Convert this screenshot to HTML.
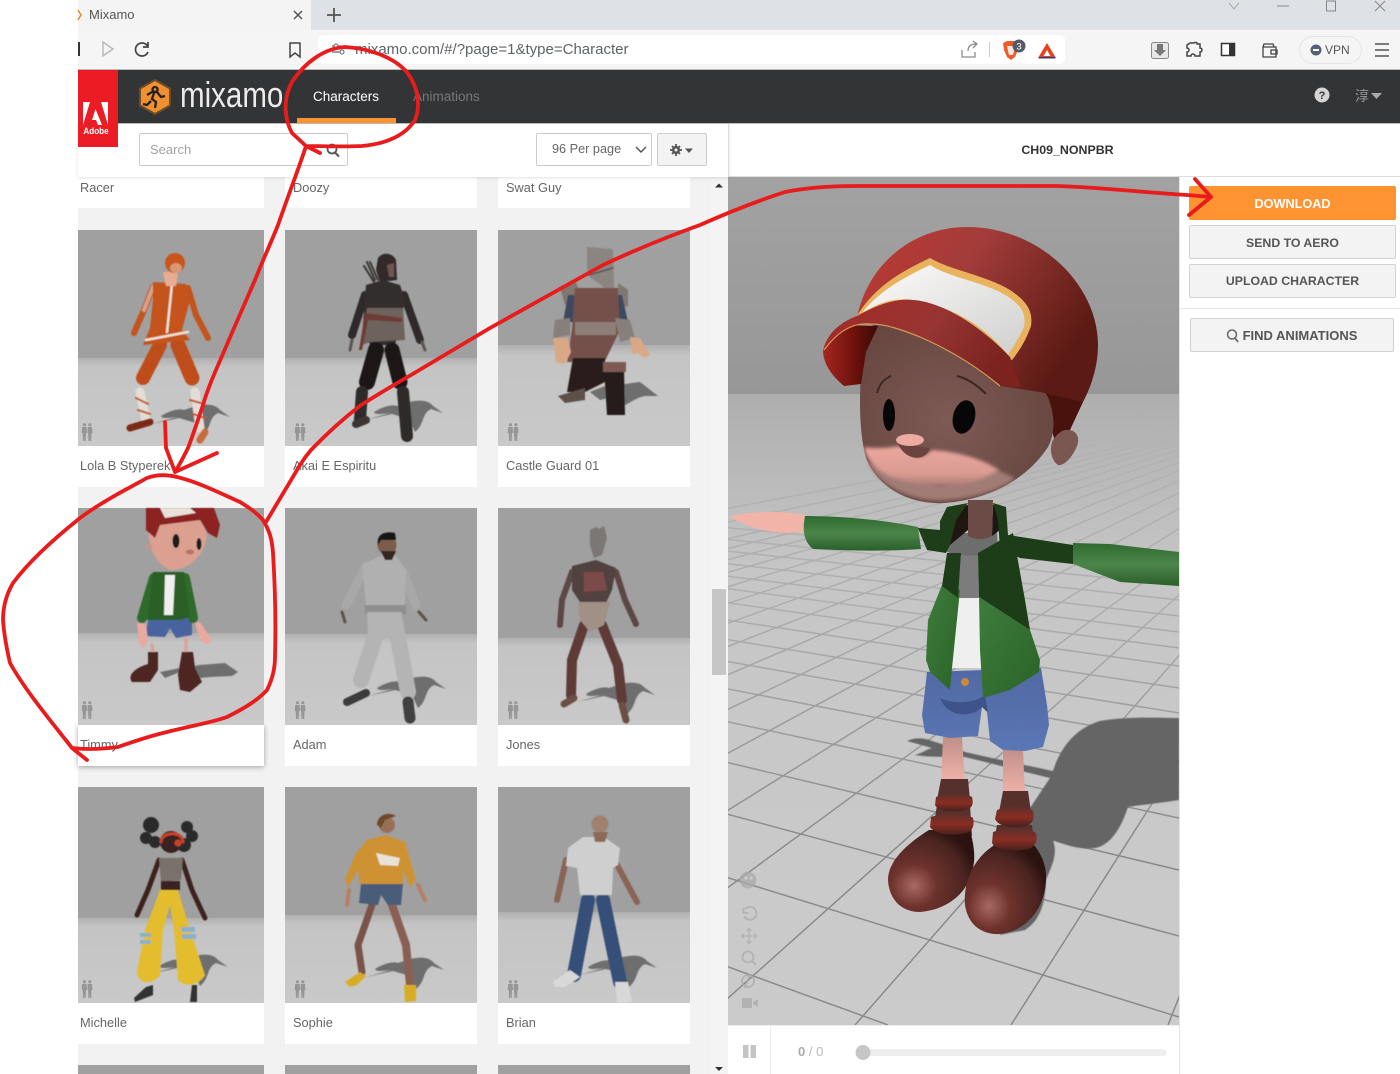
<!DOCTYPE html>
<html lang="en"><head><meta charset="utf-8"><title>Mixamo</title>
<style>
*{box-sizing:border-box}
html,body{margin:0;padding:0;width:1400px;height:1074px;overflow:hidden;background:#fff;font-family:"Liberation Sans","Noto Sans CJK SC",sans-serif}
#w{position:relative;width:1400px;height:1074px;overflow:hidden}
.a{position:absolute}
.lab{position:absolute;font-size:12.8px;color:#666;line-height:16px;white-space:nowrap;z-index:2}
.card{position:absolute;background:#fff}
.btn{position:absolute;border:1px solid #d2d2d2;background:#f3f3f3;border-radius:2px;color:#555;font-weight:bold;font-size:12.3px;text-align:center;white-space:nowrap}
svg{position:absolute;left:0;top:0;overflow:hidden}
</style></head><body><div id="w">
<!-- browser chrome -->
<div class="a" style="left:78px;top:0;width:1322px;height:30px;background:#dee1e6"></div>
<div class="a" style="left:78px;top:0;width:233px;height:30px;background:#f4f4f4"></div>
<div class="a" style="left:78px;top:30px;width:1322px;height:40px;background:#f5f5f5;border-bottom:1px solid #bbb"></div>
<div class="a" style="left:318px;top:35px;width:747px;height:29px;background:#fff;border-radius:5px"></div>
<div class="a" style="left:89px;top:7px;font-size:13px;color:#555;line-height:16px">Mixamo</div>
<div class="a" style="left:355px;top:41px;font-size:15px;color:#5f6368;line-height:18px;white-space:nowrap">mixamo.com/#/?page=1&amp;type=Character</div>
<div class="a" style="left:1325px;top:43px;font-size:12px;color:#555;line-height:15px">VPN</div>
<!-- header -->
<div class="a" style="left:78px;top:70px;width:1322px;height:54px;background:#333436;border-bottom:1px solid #bdbdbd"></div>
<div class="a" style="left:180px;top:72px;font-size:36px;line-height:46px;color:#ececec;transform:scaleX(.82);transform-origin:0 0;white-space:nowrap">mixamo</div>
<div class="a" style="left:313px;top:88px;font-size:13.5px;color:#fff;line-height:17px">Characters</div>
<div class="a" style="left:413px;top:88px;font-size:13.5px;color:#777;line-height:17px">Animations</div>
<div class="a" style="left:297px;top:118px;width:99px;height:5px;background:#ff9231"></div>
<div class="a" style="left:1355px;top:88px;font-size:14px;color:#999;line-height:17px">淳</div>
<!-- toolbar -->
<div class="a" style="left:78px;top:124px;width:651px;height:53px;background:#fff;border-right:1px solid #ddd;box-shadow:0 1px 3px rgba(0,0,0,.12);z-index:3"></div>
<div class="a" style="left:78px;top:70px;width:40px;height:77px;background:#ec1c24;z-index:4"></div>
<div class="a" style="left:78px;top:126px;width:36px;text-align:center;font-size:9px;font-weight:bold;color:#fff;line-height:11px;transform:scaleX(.9);z-index:5">Adobe</div>
<div class="a" style="left:139px;top:133px;width:209px;height:33px;border:1px solid #ccc;border-radius:2px;z-index:4;background:#fff;font-size:13px;color:#a0a0a0;line-height:31px;padding-left:10px">Search</div>
<div class="a" style="left:536px;top:133px;width:116px;height:33px;border:1px solid #ccc;border-radius:2px;z-index:4;background:#fff;font-size:12.7px;color:#666;line-height:31px;padding-left:15px;white-space:nowrap">96 Per page</div>
<div class="a" style="left:657px;top:133px;width:50px;height:33px;border:1px solid #ccc;border-radius:2px;z-index:4;background:#f3f3f3"></div>
<div class="a" style="left:729px;top:124px;width:671px;height:53px;background:#fff;border-bottom:1px solid #ddd;text-align:center;font-weight:bold;font-size:12.4px;line-height:52px;color:#333;padding-left:6px">CH09_NONPBR</div>
<!-- list -->
<div class="a" style="left:78px;top:177px;width:650px;height:897px;background:#f2f2f2"></div>
<div class="a" style="left:711px;top:177px;width:17px;height:897px;background:#f4f4f4"></div>
<div class="a" style="left:712px;top:589px;width:14px;height:86px;background:#c6c6c6"></div>
<div class="card" style="left:78px;top:177px;width:186px;height:31px"></div>
<div class="card" style="left:285px;top:177px;width:192px;height:31px"></div>
<div class="card" style="left:498px;top:177px;width:192px;height:31px"></div>
<div class="card" style="left:78px;top:446px;width:186px;height:41px"></div>
<div class="card" style="left:285px;top:446px;width:192px;height:41px"></div>
<div class="card" style="left:498px;top:446px;width:192px;height:41px"></div>
<div class="card" style="left:78px;top:725px;width:186px;height:41px;box-shadow:0 1px 5px rgba(0,0,0,.35)"></div>
<div class="card" style="left:285px;top:725px;width:192px;height:41px"></div>
<div class="card" style="left:498px;top:725px;width:192px;height:41px"></div>
<div class="card" style="left:78px;top:1003px;width:186px;height:41px"></div>
<div class="card" style="left:285px;top:1003px;width:192px;height:41px"></div>
<div class="card" style="left:498px;top:1003px;width:192px;height:41px"></div>
<!-- right column -->
<div class="a" style="left:1179px;top:177px;width:221px;height:897px;background:#fff;border-left:1px solid #e4e4e4"></div>
<div class="a" style="left:728px;top:1025px;width:452px;height:49px;background:#fff;border-right:1px solid #e4e4e4;border-top:1px solid #eee"></div>
<div class="a" style="left:770px;top:1026px;width:1px;height:48px;background:#eee"></div>
<div class="a" style="left:798px;top:1044px;font-size:13px;color:#bbb;line-height:16px;z-index:2"><b style="color:#aaa">0</b> / 0</div>
<div class="btn" style="left:1189px;top:186px;width:207px;height:34px;background:#ff9231;border-color:#ff9231;color:#fff;line-height:34px;font-size:12.7px">DOWNLOAD</div>
<div class="btn" style="left:1189px;top:225px;width:207px;height:34px;line-height:34px">SEND TO AERO</div>
<div class="btn" style="left:1189px;top:264px;width:207px;height:34px;line-height:32px">UPLOAD CHARACTER</div>
<div class="a" style="left:1180px;top:308px;width:220px;height:1px;background:#e4e4e4"></div>
<div class="btn" style="left:1190px;top:318px;width:204px;height:34px;line-height:33px;padding-left:16px;font-size:13px">FIND ANIMATIONS</div>

<!-- scene + thumbnails -->
<svg width="1400" height="1074" viewBox="0 0 1400 1074" style="z-index:1">
<defs>
<linearGradient id="bk" x1="0" y1="0" x2="0" y2="1"><stop offset="0" stop-color="#a2a2a2"/><stop offset="1" stop-color="#979797"/></linearGradient>
<linearGradient id="fl" x1="0" y1="0" x2="0" y2="1"><stop offset="0" stop-color="#aeaeae"/><stop offset=".28" stop-color="#c6c6c6"/><stop offset="1" stop-color="#cbcbcb"/></linearGradient>
<linearGradient id="tf" x1="0" y1="0" x2="0" y2="1"><stop offset="0" stop-color="#b0b0b0"/><stop offset=".1" stop-color="#c4c4c4"/><stop offset="1" stop-color="#c9c9c9"/></linearGradient>
<linearGradient id="gl" gradientUnits="userSpaceOnUse" x1="0" y1="400" x2="0" y2="850"><stop offset="0" stop-color="#b4b4b4"/><stop offset=".45" stop-color="#aeaeae"/><stop offset="1" stop-color="#8a8a8a"/></linearGradient>
<linearGradient id="cap" x1="0" y1="0" x2="1" y2=".5"><stop offset="0" stop-color="#bf3832"/><stop offset=".45" stop-color="#a23c3a"/><stop offset="1" stop-color="#5b1a14"/></linearGradient>
<linearGradient id="brim" x1="0" y1="0" x2="1" y2=".3"><stop offset="0" stop-color="#a52a26"/><stop offset=".6" stop-color="#963533"/><stop offset="1" stop-color="#7c2320"/></linearGradient>
<linearGradient id="ud" x1="0" y1="0" x2="1" y2="0"><stop offset="0" stop-color="#a62620"/><stop offset=".6" stop-color="#6a100c"/><stop offset="1" stop-color="#3a0a06"/></linearGradient>
<linearGradient id="patch" x1="0" y1="0" x2="1" y2="1"><stop offset="0" stop-color="#fdfcfa"/><stop offset="1" stop-color="#cfcfcf"/></linearGradient>
<radialGradient id="face" cx=".45" cy=".55" r=".65"><stop offset="0" stop-color="#7e5a55"/><stop offset="1" stop-color="#66453f"/></radialGradient>
<linearGradient id="lit" x1="0" y1="0" x2="0" y2="1"><stop offset="0" stop-color="#eba89f"/><stop offset=".7" stop-color="#d99a91"/><stop offset="1" stop-color="#a87a73"/></linearGradient>
<linearGradient id="arm" x1="0" y1="0" x2="0" y2="1"><stop offset="0" stop-color="#2f6a2e"/><stop offset=".5" stop-color="#4c8549"/><stop offset="1" stop-color="#2a5f2a"/></linearGradient>
<linearGradient id="jk" x1="0" y1="0" x2="1" y2="1"><stop offset="0" stop-color="#3f7c3c"/><stop offset="1" stop-color="#2a6427"/></linearGradient>
<linearGradient id="sh" x1="0" y1="0" x2="0" y2="1"><stop offset="0" stop-color="#5169a3"/><stop offset="1" stop-color="#5a76b4"/></linearGradient>
<linearGradient id="leg" x1="0" y1="0" x2="0" y2="1"><stop offset="0" stop-color="#c08f88"/><stop offset="1" stop-color="#f5b5ab"/></linearGradient>
<radialGradient id="boot" cx=".3" cy=".68" r=".75"><stop offset="0" stop-color="#a76a62"/><stop offset=".35" stop-color="#6e322c"/><stop offset=".8" stop-color="#4a2420"/><stop offset="1" stop-color="#2c1311"/></radialGradient>
<linearGradient id="ring" x1="0" y1="0" x2="0" y2="1"><stop offset="0" stop-color="#5e302b"/><stop offset=".5" stop-color="#8a2d22"/><stop offset="1" stop-color="#45201c"/></linearGradient>
<clipPath id="cv"><rect x="728" y="177" width="451" height="848"/></clipPath>
<clipPath id="fc"><rect x="728" y="396" width="451" height="629"/></clipPath>
<filter id="b" x="-5%" y="-5%" width="110%" height="110%"><feGaussianBlur stdDeviation=".45"/></filter>
<filter id="b3" x="-10%" y="-20%" width="120%" height="140%"><feGaussianBlur stdDeviation="1.800"/></filter>
<symbol id="ppl" viewBox="0 0 12 18" width="12" height="18"><g fill="#8a8a8a"><circle cx="3.4" cy="1.8" r="1.6"/><path d="M1.2 4h4.4l.4 6-1 0-.3 8H3.6l-.2-5-.2 5H2l-.3-8-1 0z"/><circle cx="8.8" cy="1.8" r="1.6"/><path d="M6.7 4h4.3l.5 6-1 0-.3 8H9l-.2-5-.2 5H7.4l-.3-8-.6 0z"/></g></symbol>
<path id="sd" fill="#6e6e6e" d="M368 696L393 689C385 690 378 691 377 688C385 683 395 680 400 682L412 678C425 675 432 677 436 682L446 689L434 685C424 690 428 700 418 708L412 695L395 690Z"/>
</defs>

<!-- main viewport -->
<g clip-path="url(#cv)">
<rect x="728" y="177" width="451" height="219" fill="url(#bk)"/>
<rect x="728" y="394" width="451" height="631" fill="url(#fl)"/>
<g clip-path="url(#fc)" stroke="url(#gl)" stroke-width="1.5" fill="none">
<path d="M-900 375L888 1025M-900 375L1179 1017M-900 375L1179 936M-900 375L1179 870M-900 375L1179 818M-900 375L1179 776M-900 375L1179 741M-900 375L1179 713M-900 375L1179 688M-900 375L1179 666M-900 375L1179 648M-900 375L1179 632M-900 375L1179 616M-900 375L1179 600M-900 375L1179 585M-900 375L1179 570"/>
<path d="M1425 375L1168 1025M1425 375L1011 1025M1425 375L855 1025M1425 375L698 1025M1425 375L541 1025M1425 375L384 1025M1425 375L227 1025M1425 375L70 1025M1425 375L-87 1025M1425 375L-244 1025M1425 375L-401 1025M1425 375L-558 1025M1425 375L-715 1025M1425 375L-872 1025M1425 375L-1029 1025M1425 375L-1186 1025M1425 375L-1343 1025M1425 375L-1657 1025M1425 375L-1971 1025"/>
</g>
<!-- cast shadow -->
<path fill="#656565" filter="url(#b)" d="M907 741C915 737 925 738 932 741C945 745 955 748 965 752C1000 760 1030 766 1053 771C1058 755 1070 730 1100 721C1130 716 1160 718 1179 718L1179 800C1160 803 1140 805 1128 807C1122 825 1112 845 1095 848C1080 850 1065 845 1053 840C1058 855 1052 865 1046 880C1045 905 1040 920 1025 930L1000 935L1030 808L1050 778L965 757C945 757 925 757 915 755C925 752 925 750 932 748Z"/>
<path fill="#656565" d="M972 838C950 842 925 855 905 880L972 875Z"/>
<!-- legs -->
<path fill="url(#leg)" d="M943 737L962 737L965 785L941 785Z"/>
<path fill="url(#leg)" d="M1003 748L1023 748L1025 798L1003 798Z"/>
<!-- shorts -->
<path fill="url(#sh)" d="M927 672L1041 668L1047 705L1049 725L1043 747L1025 751L1003 750L990 741L987 712L982 707L978 736L950 738L925 733L922 715L925 690Z"/>
<path fill="#3e5389" d="M940 698C955 705 975 703 985 695L988 712L982 707L976 712C960 718 945 712 940 698Z"/>
<circle cx="965" cy="682" r="4" fill="#c98a3a"/>
<!-- torso -->
<path fill="#efefef" d="M958 597L979 597L981 668L952 668Z"/>
<path fill="#7c7c7c" d="M961 553L978 553L979 598L958 598Z"/>
<path fill="#6d6d6d" d="M947 533L997 533L998 552C985 556 955 558 946 551Z"/>
<path fill="#6c4a45" d="M968 500L993 500L992 536C985 540 975 540 968 536Z"/>
<path fill="#201611" d="M948 510L968 505L968 530L950 545Z"/>
<path fill="#1d1612" d="M993 505L1002 507L1000 530L992 536Z"/>
<path fill="url(#jk)" d="M942 585L960 590L952 668L950 690L930 672L926 660L928 620Z"/>
<path fill="#1c3d18" d="M947 553L961 553L958 598L942 586Z"/>
<path fill="url(#jk)" d="M979 597L1030 630L1040 660L1039 672L1010 690L983 698L980 650Z"/>
<path fill="#1c3d18" d="M978 553L1013 533L1025 600L1030 630L979 597Z"/>
<path fill="#1d3e18" d="M940 521L947 507L968 503L956 520L950 545L946 553L927 550L918 528L940 530Z"/>
<path fill="#1c3d18" d="M993 503L1006 507L1008 535L1073 545L1073 564L1020 558L1000 548L998 520Z"/>
<!-- arms -->
<path fill="#f2b3a8" d="M730 516C750 512 775 510 806 515L808 530C790 536 765 532 750 526L737 521Z"/>
<path fill="url(#arm)" d="M805 516C835 516 880 519 918 527L921 549C880 552 835 550 813 549C802 540 803 527 805 516Z"/>
<path fill="url(#arm)" d="M1073 543L1110 544L1179 552L1179 586L1120 582L1073 564Z"/>
<!-- boots -->
<path fill="#56302c" d="M941 779L968 779L970 800L937 800Z"/>
<path fill="#56302c" d="M937 805L970 805L972 836L932 836Z"/>
<path fill="url(#boot)" d="M929 830L970 830C973 842 976 855 973 868C968 895 945 910 920 912C900 912 889 898 888 880C888 862 905 845 929 830Z"/>
<path fill="url(#ring)" d="M931 817C945 812 968 813 973 818C975 826 972 831 966 833C950 837 935 834 930 827Z"/>
<path fill="url(#ring)" d="M936 797C950 793 968 794 972 797C974 804 972 808 966 810C950 813 938 811 935 805Z"/>
<path fill="#56302c" d="M1003 791L1028 791L1031 812L999 812Z"/>
<path fill="#56302c" d="M997 825L1032 825L1035 852L992 852Z"/>
<path fill="url(#boot)" d="M993 846L1035 846C1042 856 1046 865 1046 877C1046 905 1030 930 1000 934C982 935 968 925 965 905C963 880 975 858 993 846Z"/>
<path fill="url(#ring)" d="M993 832C1008 827 1030 828 1036 833C1038 841 1035 847 1028 849C1010 853 996 850 992 843Z"/>
<path fill="url(#ring)" d="M997 810C1010 805 1028 806 1033 811C1035 819 1032 824 1026 826C1012 829 999 827 995 819Z"/>
<!-- head -->
<path fill="#4a120c" d="M1040 385L1083 402L1070 430L1055 442Z"/>
<path fill="#7a5651" d="M1053 440C1058 433 1063 429 1068 430C1077 430 1080 438 1077 446C1073 456 1065 466 1058 465C1051 460 1049 448 1053 440Z"/>
<path fill="url(#face)" d="M866 330C858 380 858 430 866 458C880 492 915 505 945 503C985 500 1025 482 1048 447C1060 425 1050 395 1040 385L880 320Z"/>
<path fill="#a07c75" filter="url(#b3)" d="M868 462C880 488 915 502 945 500C975 498 1000 490 1015 478L997 470L940 486Z"/>
<path fill="url(#lit)" filter="url(#b3)" d="M864 447C880 450 895 446 905 446L912 455C922 460 930 452 932 450C960 452 985 460 999 470C975 485 950 488 925 485C895 482 868 470 864 447Z"/>
<path fill="#6a433e" d="M898 444C905 460 925 463 930 448Z"/>
<ellipse cx="910" cy="440" rx="14" ry="6" fill="#eeaba2"/>
<ellipse cx="889" cy="415" rx="6" ry="16" fill="#070707"/>
<ellipse cx="964" cy="417" rx="11" ry="17" fill="#070707" transform="rotate(14 964 417)"/>
<path d="M877 393C880 383 884 379 891 376" stroke="#3a2622" stroke-width="1.8" fill="none"/>
<path d="M957 376C970 379 980 388 986 394" stroke="#3a2622" stroke-width="2" fill="none"/>
<!-- cap -->
<path fill="url(#ud)" d="M823 352C826 338 835 327 842 325L878 326L866 352L861 384L844 386C832 376 824 365 823 352Z"/>
<path fill="url(#cap)" d="M857 318C868 262 915 227 967 227C1040 227 1098 285 1098 345C1098 365 1092 385 1083 402L1040 392L1000 386L910 310Z"/>
<path fill="#e9b35d" d="M857 316C875 285 905 270 930 258C950 270 985 275 1010 290C1028 302 1033 312 1031 326C1026 340 1020 350 1012 360Z"/>
<path fill="url(#patch)" d="M862 313C880 290 905 277 930 265C950 278 985 282 1007 296C1024 307 1026 316 1024 327C1018 340 1012 348 1008 355C990 332 960 308 913 300C890 297 875 305 862 313Z"/>
<path fill="url(#brim)" d="M823 351C826 335 840 322 857 316C880 303 900 298 913 300C945 302 985 330 1010 357L1021 387L1000 386C975 365 950 350 920 337C900 329 885 324 870 324C850 322 835 335 823 351Z"/>
<path d="M824 350C835 335 850 322 870 324C885 324 900 329 920 337C950 350 975 365 1000 386" stroke="#d59a55" stroke-width="1.2" fill="none"/>
</g>
<!-- viewport tools -->
<g fill="none" stroke="#aaa" stroke-width="1.8" opacity=".75">
<circle cx="748" cy="880" r="7.5" fill="#aaa"/>
<path d="M745 909a6.500 6.500 0 1 1-1 7M743.500 908v5h5"/>
<path d="M749 929v14M742 936h14M746.500 931l2.500-2.500 2.500 2.500M746.500 941l2.500 2.500 2.500-2.500M744 933.500L741.500 936l2.500 2.500M754 933.500l2.500 2.500-2.500 2.500" stroke-width="1.3"/>
<circle cx="748" cy="957" r="5.500"/><path d="M752 961l4 4"/>
<circle cx="748" cy="981" r="6"/><path d="M750 974l-5 14"/>
<path fill="#aaa" stroke="none" d="M742 998h10v10h-10zM753 1002l5-3v8l-5-3z"/>
</g>
<circle cx="746" cy="878" r="1.600" fill="#ccc"/><circle cx="751" cy="878" r="1.600" fill="#ccc"/>
<!-- player -->
<rect x="743" y="1045" width="5.500" height="13" fill="#c4c4c4"/><rect x="750.500" y="1045" width="5.500" height="13" fill="#c4c4c4"/>
<rect x="856" y="1049" width="311" height="7" rx="3.500" fill="#eee"/>
<circle cx="863" cy="1052.500" r="7.500" fill="#c6c6c6"/>

<!-- thumbnails -->
<rect x="78" y="230" width="186" height="128" fill="#a0a0a0"/><rect x="78" y="358" width="186" height="88" fill="url(#tf)"/>
<rect x="285" y="230" width="192" height="128" fill="#a0a0a0"/><rect x="285" y="358" width="192" height="88" fill="url(#tf)"/>
<rect x="498" y="230" width="192" height="115" fill="#a0a0a0"/><rect x="498" y="345" width="192" height="101" fill="url(#tf)"/>
<rect x="78" y="508" width="186" height="133" fill="#a0a0a0"/><rect x="78" y="633" width="186" height="92" fill="url(#tf)"/>
<rect x="285" y="508" width="192" height="126" fill="#a0a0a0"/><rect x="285" y="634" width="192" height="91" fill="url(#tf)"/>
<rect x="498" y="508" width="192" height="130" fill="#a0a0a0"/><rect x="498" y="638" width="192" height="87" fill="url(#tf)"/>
<rect x="78" y="787" width="186" height="131" fill="#a0a0a0"/><rect x="78" y="918" width="186" height="85" fill="url(#tf)"/>
<rect x="285" y="787" width="192" height="128" fill="#a0a0a0"/><rect x="285" y="915" width="192" height="88" fill="url(#tf)"/>
<rect x="498" y="787" width="192" height="125" fill="#a0a0a0"/><rect x="498" y="912" width="192" height="91" fill="url(#tf)"/>
<rect x="78" y="1065" width="186" height="9" fill="#a0a0a0"/><rect x="285" y="1065" width="192" height="9" fill="#a0a0a0"/><rect x="498" y="1065" width="192" height="9" fill="#a0a0a0"/>
<g opacity=".8"><use href="#ppl" x="81" y="423"/><use href="#ppl" x="294" y="423"/><use href="#ppl" x="507" y="423"/><use href="#ppl" x="81" y="701"/><use href="#ppl" x="294" y="701"/><use href="#ppl" x="507" y="701"/><use href="#ppl" x="81" y="980"/><use href="#ppl" x="294" y="980"/><use href="#ppl" x="507" y="980"/></g>

<g filter="url(#b)" stroke-linecap="round" stroke-linejoin="round">
<!-- shadows -->
<use href="#sd" x="-216" y="-272"/><use href="#sd" x="-3" y="-276"/><use href="#sd" x="0" y="0"/><use href="#sd" x="209" y="6"/><use href="#sd" x="-218" y="278"/><use href="#sd" x="-2" y="281"/><use href="#sd" x="211" y="279"/>
<path fill="#6e6e6e" d="M590 392C600 388 612 382 625 384L640 382L658 396L645 396C635 398 632 402 625 405L620 395L600 400Z"/>
<path fill="#6e6e6e" d="M160 672L180 668L200 665L225 663L238 672L232 676L210 677L200 678L180 672L165 678Z"/>
<!-- Lola -->
<g fill="none">
<path stroke="#c4531f" stroke-width="6" d="M153 287L144 310L134 333"/><path stroke="#d8a188" stroke-width="4" d="M153 287L144 310"/>
<path stroke="#c4531f" stroke-width="6" d="M188 288L196 315L208 338"/>
<path stroke="#bf4e1b" stroke-width="14" d="M160 345L143 378"/><path stroke="#bf4e1b" stroke-width="15" d="M178 345L192 378"/>
<path stroke="#e4ddd5" stroke-width="9" d="M140 392L146 420"/><path stroke="#bf5a2b" stroke-width="2" d="M136 398L148 404M138 410L150 414"/>
<path stroke="#e4ddd5" stroke-width="9" d="M195 392L200 428"/><path stroke="#bf5a2b" stroke-width="2" d="M190 400L204 404M193 414L205 418"/>
<path stroke="#7a2a14" stroke-width="7" d="M130 428L150 422"/><path stroke="#c96a3e" stroke-width="7" d="M200 440L205 432"/>
</g>
<path fill="#c4531f" d="M153 282L186 284L190 300L182 330L190 340L143 345L150 328L153 300Z"/>
<path stroke="#ede0d5" stroke-width="2.500" fill="none" d="M172 284L167 332M146 340L188 332"/>
<path fill="#e8ad90" d="M163 272H178L176 286H166Z"/>
<circle cx="175" cy="263" r="10" fill="#c9541f"/><ellipse cx="176" cy="268" rx="6" ry="5" fill="#d99773"/>
<!-- Akai -->
<path stroke="#3a3432" stroke-width="2" fill="none" d="M367 262L375 280M364 266L374 282M370 262L378 280"/>
<path fill="none" stroke="#2f2c2c" stroke-width="8" d="M365 295L352 335"/>
<path fill="none" stroke="#2f2c2c" stroke-width="8" d="M404 295L420 340"/>
<path fill="none" stroke="#5a5350" stroke-width="3" d="M352 340L350 350M422 342L425 350"/>
<path fill="#332f2e" d="M366 285L383 280L400 285L405 300L400 325L395 345L370 345L363 325Z"/>
<path fill="#6d625c" d="M367 308L403 308L405 340L370 342L360 346Z"/>
<path fill="#6e3a36" d="M365 313L402 318L402 322L368 320L362 350L359 350Z"/>
<path fill="none" stroke="#1b1918" stroke-width="16" d="M376 350L367 382"/><path fill="none" stroke="#1b1918" stroke-width="15" d="M392 350L400 382"/>
<path fill="none" stroke="#2d2a29" stroke-width="12" d="M362 392L360 420"/><path fill="none" stroke="#2d2a29" stroke-width="12" d="M403 392L407 436"/>
<path fill="none" stroke="#3d3431" stroke-width="8" d="M356 424L366 420"/>
<path fill="#302c2c" d="M378 258C382 252 392 252 396 260L397 280L380 282L376 270Z"/><path fill="#73534f" d="M387 265L394 263L394 277L389 277Z"/>
<!-- Castle guard -->
<path fill="#7f776f" d="M560 287L576 282L582 300L565 305Z"/><path fill="#7f776f" d="M618 283L628 290L628 306L619 308Z"/>
<path fill="#3c4860" d="M568 295H622L628 322H563Z"/>
<path fill="#75504a" d="M575 288L618 288L620 330L603 365L585 362L567 362L572 330Z"/>
<path fill="#8d7f78" d="M575 322L616 322L616 335L575 335Z"/>
<path fill="#867f7b" d="M555 320L570 318L570 335L553 338Z"/><path fill="#867f7b" d="M615 318L630 320L635 338L620 342Z"/>
<path fill="#d9a886" d="M553 338L568 338L571 352L565 364L556 362Z"/><path fill="#d9a886" d="M630 337L640 338L650 355L645 358L637 353L633 355Z"/>
<path fill="#2a1e1c" d="M573 358L605 358L605 382L585 392H567Z"/><path fill="#271e1b" d="M604 368L624 368L625 415L607 415Z"/>
<path fill="#5d4f49" d="M558 396L585 388L585 400L565 403Z"/><path fill="#7d5a52" d="M603 362L626 362L626 372L603 372Z"/>
<path fill="#8a8580" d="M587 247L613 249L614 288L605 288L590 277L587 268Z"/><path d="M589 275L613 268" stroke="#555" stroke-width="1.500"/>
<!-- Timmy -->
<path fill="none" stroke="#d9a49a" stroke-width="3.500" d="M152 645L153 652M186 636L186 652"/>
<path fill="#49639f" d="M149 617L192 617L192 635L176 638L170 628L165 637L145 636Z"/>
<path fill="none" stroke="#2e6a2b" stroke-width="10" d="M154 578L142 618M185 578L193 618"/>
<path fill="#2a6127" d="M153 572L184 572L190 617L180 620H156L147 620Z"/>
<path fill="#efefef" d="M165 575L175 575L173 615L164 615Z"/>
<path fill="#e8a99f" d="M137 623L146 624L148 640L144 648L139 644Z"/><path fill="#e8a99f" d="M195 623L200 622L212 640L207 645L200 640Z"/>
<path fill="#4e2823" d="M148 652L158 652L158 670L150 682L132 682C127 675 135 668 148 664Z"/><path fill="#4e2823" d="M182 652L193 652L195 668L202 682L190 692L180 690L178 675Z"/>
<path fill="#dba090" d="M149 520C147 540 150 560 170 570C190 570 205 555 207 535L200 515L155 512Z"/>
<ellipse cx="176" cy="541" rx="3.500" ry="7" fill="#1a1a1a"/><ellipse cx="199" cy="544" rx="2.500" ry="6" fill="#1a1a1a"/><ellipse cx="190" cy="552" rx="4" ry="2.500" fill="#b07568"/>
<path fill="#8d2320" d="M146 508L214 508L220 525L217 538L208 533L200 520L160 525L155 538L146 530Z"/><path fill="#e8e2d8" d="M160 508H190L196 513L165 518Z"/>
<circle cx="149" cy="547" r="3" fill="#c9928a"/>
<!-- Adam -->
<g fill="none"><path stroke="#a8a8a8" stroke-width="9" d="M366 566L346 605"/><path stroke="#a8a8a8" stroke-width="9" d="M403 572L416 605"/>
<path stroke="#b4b4b4" stroke-width="16" d="M380 622L361 680"/><path stroke="#b4b4b4" stroke-width="16" d="M395 622L408 692"/>
<path stroke="#5e5147" stroke-width="3" d="M342 612L345 622M419 612L426 620"/>
<path stroke="#3a3a3a" stroke-width="8" d="M347 702L366 693"/><path stroke="#3f3f3f" stroke-width="11" d="M408 702L410 718"/></g>
<path fill="#b0b0b0" d="M362 565L380 556L396 556L406 570L405 605H366Z"/><rect x="365" y="605" width="41" height="9" fill="#8e8e8e"/><path fill="#b4b4b4" d="M367 612H402L400 632L380 640L368 632Z"/>
<circle cx="387" cy="545" r="9.500" fill="#7c5c4c"/><path fill="#151515" d="M378 545C376 534 385 531 395 533L396 540L381 540Z"/><path fill="#342820" d="M381 551H396L392 560H385Z"/>
<!-- Jones -->
<g fill="none"><path stroke="#5d4644" stroke-width="6" d="M572 572L562 600L560 625"/><path stroke="#5d4644" stroke-width="6" d="M616 572L625 600L636 624"/>
<path stroke="#5f3a38" stroke-width="10" d="M584 625L572 660L571 695"/><path stroke="#5f3a38" stroke-width="10" d="M602 625L618 665L622 700"/>
<path stroke="#6a5044" stroke-width="7" d="M564 704L574 698"/><path stroke="#6a5044" stroke-width="7" d="M622 705L626 720"/></g>
<path fill="#51423f" d="M572 566L596 560L616 568L612 590L605 605L582 605L572 590Z"/><path fill="#7c4c48" d="M584 572L603 572L607 590L584 592Z"/>
<path fill="#a09085" d="M578 602L610 602L604 625L590 632L580 620Z"/>
<path fill="#7b7774" d="M590 530L596 527L599 529L604 526L607 538L602 555L594 558L590 545Z"/>
<!-- Michelle -->
<g fill="none"><path stroke="#3e231e" stroke-width="5" d="M159 860L148 890L137 915"/><path stroke="#3e231e" stroke-width="5" d="M182 860L192 890L205 918"/></g>
<path fill="#7a716a" d="M159 858L183 858L181 880L161 882Z"/><rect x="161" y="881" width="19" height="9" fill="#3a2420"/>
<path fill="#e3bd2e" d="M160 890L178 890L190 930L205 975C200 985 185 988 178 980L174 930L170 905L163 930L160 975C153 985 138 985 137 972L145 930Z"/>
<rect x="140" y="933" width="11" height="4" fill="#8bb1c7"/><rect x="140" y="940" width="11" height="4" fill="#8bb1c7"/><rect x="181" y="927" width="14" height="5" fill="#8bb1c7"/><rect x="182" y="934" width="14" height="5" fill="#8bb1c7"/>
<path fill="#333" d="M146 987L153 985L153 995L135 1002L134 998Z"/><path fill="#333" d="M192 985L197 985L197 1002L190 1002Z"/>
<circle cx="171" cy="842" r="11" fill="#3a2420"/><circle cx="151" cy="825" r="8" fill="#2c2c2c"/><circle cx="146" cy="838" r="6" fill="#2c2c2c"/><circle cx="187" cy="827" r="6" fill="#2c2c2c"/><circle cx="192" cy="836" r="6" fill="#2c2c2c"/><circle cx="184" cy="845" r="7" fill="#2c2c2c"/><circle cx="155" cy="842" r="6" fill="#2c2c2c"/>
<path fill="none" stroke="#c8432a" stroke-width="3" d="M161 842C161 832 182 830 183 842"/><circle cx="178" cy="843" r="3.500" fill="#c8432a"/>
<!-- Sophie -->
<g fill="none"><path stroke="#7a5248" stroke-width="7" d="M372 905L358 945L362 972"/><path stroke="#8a5f52" stroke-width="8" d="M392 905L406 945L410 985"/>
<path stroke="#b57f65" stroke-width="4" d="M349 890L347 905M418 885L425 900"/></g>
<path fill="#cf9233" d="M367 840L385 835L405 842L416 880L410 887L403 870L403 885H360L358 870L348 887L345 880L355 855Z"/>
<path fill="#e8e3d6" d="M376 853L400 858L398 866L380 865Z"/>
<path fill="#495d7a" d="M361 884H403L401 905H388L381 895L378 905L359 903Z"/>
<path fill="#d8ad28" d="M345 982L360 972L366 976L357 985L350 987Z"/><path fill="#d8ad28" d="M404 985L416 985L416 1001L405 1002Z"/>
<circle cx="387" cy="825" r="8" fill="#997057"/><path fill="#6e4a2c" d="M377 825C377 815 388 811 396 816L385 820L381 828Z"/>
<!-- Brian -->
<g fill="none"><path stroke="#8a6555" stroke-width="6" d="M566 860L557 900"/><path stroke="#8a6555" stroke-width="6" d="M617 865L637 902"/>
<path stroke="#354f78" stroke-width="14" d="M588 900L574 975"/><path stroke="#354f78" stroke-width="14" d="M603 900L620 982"/></g>
<path fill="#cfcfcf" d="M583 837L604 837L620 848L618 865L613 868L612 895L580 895L577 868L566 866L568 848Z"/>
<path fill="#d8d8d8" d="M553 982L570 970L580 977L565 987L555 987Z"/><path fill="#d8d8d8" d="M615 982L628 982L632 1002L617 1003Z"/>
<circle cx="600" cy="824" r="8.500" fill="#a0806e"/><path fill="#8d6a58" d="M593 832H608L605 842H595Z"/>
</g>
</svg>

<!-- labels -->
<div class="lab" style="left:80px;top:180px">Racer</div>
<div class="lab" style="left:293px;top:180px">Doozy</div>
<div class="lab" style="left:506px;top:180px">Swat Guy</div>
<div class="lab" style="left:80px;top:458px">Lola B Styperek</div>
<div class="lab" style="left:293px;top:458px">Akai E Espiritu</div>
<div class="lab" style="left:506px;top:458px">Castle Guard 01</div>
<div class="lab" style="left:80px;top:737px">Timmy</div>
<div class="lab" style="left:293px;top:737px">Adam</div>
<div class="lab" style="left:506px;top:737px">Jones</div>
<div class="lab" style="left:80px;top:1015px">Michelle</div>
<div class="lab" style="left:293px;top:1015px">Sophie</div>
<div class="lab" style="left:506px;top:1015px">Brian</div>

<!-- icons -->
<svg width="1400" height="1074" viewBox="0 0 1400 1074" style="z-index:5">
<path d="M78 10l3 5-3 5" stroke="#e58a2e" stroke-width="1.500" fill="none"/>
<path d="M294 11l8 8M302 11l-8 8" stroke="#555" stroke-width="1.500"/>
<path d="M334 8v14M327 15h14" stroke="#555" stroke-width="1.800"/>
<rect x="78" y="42" width="2" height="14" fill="#333"/>
<path d="M103 42l10 7-10 7z" fill="none" stroke="#bbb" stroke-width="1.500"/>
<path d="M148 47a6.500 6.500 0 1 0 0 5M148 42v5h-5" fill="none" stroke="#444" stroke-width="1.700"/>
<path d="M290 43h10v14l-5-4-5 4z" fill="none" stroke="#444" stroke-width="1.500"/>
<path d="M332 46h9M332 52h9" stroke="#666" stroke-width="1.300"/><circle cx="336" cy="46" r="2" fill="#fff" stroke="#666"/><circle cx="342" cy="52" r="2" fill="#fff" stroke="#666"/>
<path d="M962 50v7h13v-5M968 51c0-5 3-7 8-7M973 41l4 3-4 4" fill="none" stroke="#8a8a8a" stroke-width="1.300"/>
<rect x="989" y="42" width="1" height="15" fill="#ccc"/>
<path d="M1003 43l4-2h8l4 2-1 7-3 7-4 3-4-3-3-7z" fill="#f1592a"/><path d="M1007 46h8l-1 5-1 4h-4l-1-4z" fill="#fff" opacity=".85"/>
<circle cx="1019" cy="46" r="6.500" fill="#555b69"/>
<text x="1019" y="49.500" font-size="9.500" text-anchor="middle" fill="#fff" font-family="Liberation Sans,sans-serif">3</text>
<path d="M1047 43l9 15h-18z" fill="#e8401c"/><path d="M1047 50l3.500 6h-7z" fill="#fff"/><path d="M1039.500 57h15l1 1.500h-17z" fill="#2f3d7a"/>
<rect x="1151.500" y="42.500" width="17" height="16" rx="2" fill="#e7e7e7" stroke="#888"/><path d="M1157 44h6v6h3l-6 6-6-6h3z" fill="#777"/>
<path d="M1190 43h4a2 2 0 0 1 3 0v1h3v4a2 2 0 0 1 0 4v4h-5a2 2 0 0 0-4 0h-4v-4a2 2 0 0 0 0-4v-3z" fill="none" stroke="#444" stroke-width="1.500"/>
<rect x="1221.500" y="43.500" width="13" height="12" fill="#fff" stroke="#333" stroke-width="1.500"/><rect x="1229" y="43" width="6" height="13" fill="#333"/>
<path d="M1263 47h13v10h-13zM1263 47l1-3h9l1 3M1271 50h6v4h-6z" fill="none" stroke="#444" stroke-width="1.300"/>
<rect x="1299.500" y="36.500" width="62" height="27" rx="13.500" fill="none" stroke="#e5e5e5"/>
<circle cx="1316" cy="50" r="5.500" fill="#555f78"/><rect x="1313" y="49" width="6" height="2" fill="#fff"/>
<path d="M1375 44h14M1375 50h14M1375 56h14" stroke="#555" stroke-width="1.500"/>
<path d="M1229 3l5 6 5-6" stroke="#aaa" fill="none"/><path d="M1277 6h12" stroke="#888"/><rect x="1326.500" y="1" width="9" height="10" fill="none" stroke="#888"/><path d="M1375 1l10 10M1385 1l-10 10" stroke="#888"/>

<!-- adobe -->
<path d="M83 102h7l-7 23zM101 102h7v23zM95.500 109l6.500 16h-4l-2-5h-4z" fill="#fff"/>
<!-- logo -->
<path d="M155 80l15 8.500v17L155 114l-15-8.500v-17z" fill="#f09030" stroke="#6e4c25" stroke-width="2"/>
<path d="M155 87a2.500 2.500 0 1 0 .1 0M152 92l5 0 4 5 4-1M154 93l-2 6 4 3-1 6M151 101l-4 4-4-1M152 92l-5 3" fill="none" stroke="#26201a" stroke-width="2.300"/>
<!-- header right -->
<circle cx="1322" cy="95" r="7.500" fill="#d5d5d5"/>
<text x="1322" y="99" font-size="11" font-weight="bold" text-anchor="middle" fill="#333436" font-family="Liberation Sans,sans-serif">?</text>
<path d="M1371 93h11l-5.500 6z" fill="#aaa"/>
<!-- toolbar icons -->
<circle cx="332" cy="149" r="4.500" fill="none" stroke="#555" stroke-width="1.800"/><path d="M335 152.500l4 4" stroke="#555" stroke-width="2"/>
<path d="M636 147l5 5 5-5" fill="none" stroke="#555" stroke-width="1.500"/>
<circle cx="676" cy="150" r="4" fill="#555"/><path d="M676 144v12M670 150h12M672 146l8 8M680 146l-8 8" stroke="#555" stroke-width="1.800"/><circle cx="676" cy="150" r="1.500" fill="#f3f3f3"/>
<path d="M685 148.500h8l-4 4.500z" fill="#555"/>
<!-- scroll arrows -->
<path d="M715 187.500h8l-4-4z" fill="#333"/><path d="M715 1067h8l-4 4z" fill="#333"/>
<!-- find icon -->
<circle cx="1232" cy="334.500" r="4.500" fill="none" stroke="#666" stroke-width="1.500"/><path d="M1235 338l3 4" stroke="#666" stroke-width="1.800"/>
</svg>

<!-- red annotation -->
<svg width="1400" height="1074" viewBox="0 0 1400 1074" style="z-index:6">
<g fill="none" stroke="#e81c1c" stroke-width="3.800" stroke-linecap="round" stroke-linejoin="round">
<path d="M320 153L306 146C325 146 345 147 362 146C385 144 405 136 415 120C421 105 418 85 405 70C390 55 365 48 345 47C325 48 305 62 292 82C282 100 285 120 292 133L306 146C300 165 292 185 278 225C270 245 262 262 255 280L231 335C224 352 217 367 211 382C207 392 205 398 203 405C198 420 193 435 188 448C184 456 180 464 175 472"/>
<path d="M165 422L166 448L175 472L217 453"/>
<path d="M87 760L72 748C88 750 103 749 118 747C135 741 150 736 167 732C190 726 210 723 227 717C245 708 258 700 267 690C272 680 275 668 275 657C276 620 275 585 273 553C272 538 269 530 263 520C256 512 248 507 240 502C220 493 198 482 177 477C165 474 155 475 147 478C125 490 100 503 80 518C55 538 30 560 13 583C6 595 3 608 3 620C4 635 7 650 10 663C25 690 50 720 72 748"/>
<path d="M266 522L300 465Q305 457 311 450Q335 425 361 405Q385 390 411 375L490 328L603 265Q650 243 700 225Q745 205 785 192C810 187 835 186 856 186C920 186 990 186 1057 186C1090 187 1120 190 1146 192C1170 194 1190 195 1211 197"/>
<path d="M1195 179L1211 197L1189 215"/>
</g>
</svg>
</div></body></html>
